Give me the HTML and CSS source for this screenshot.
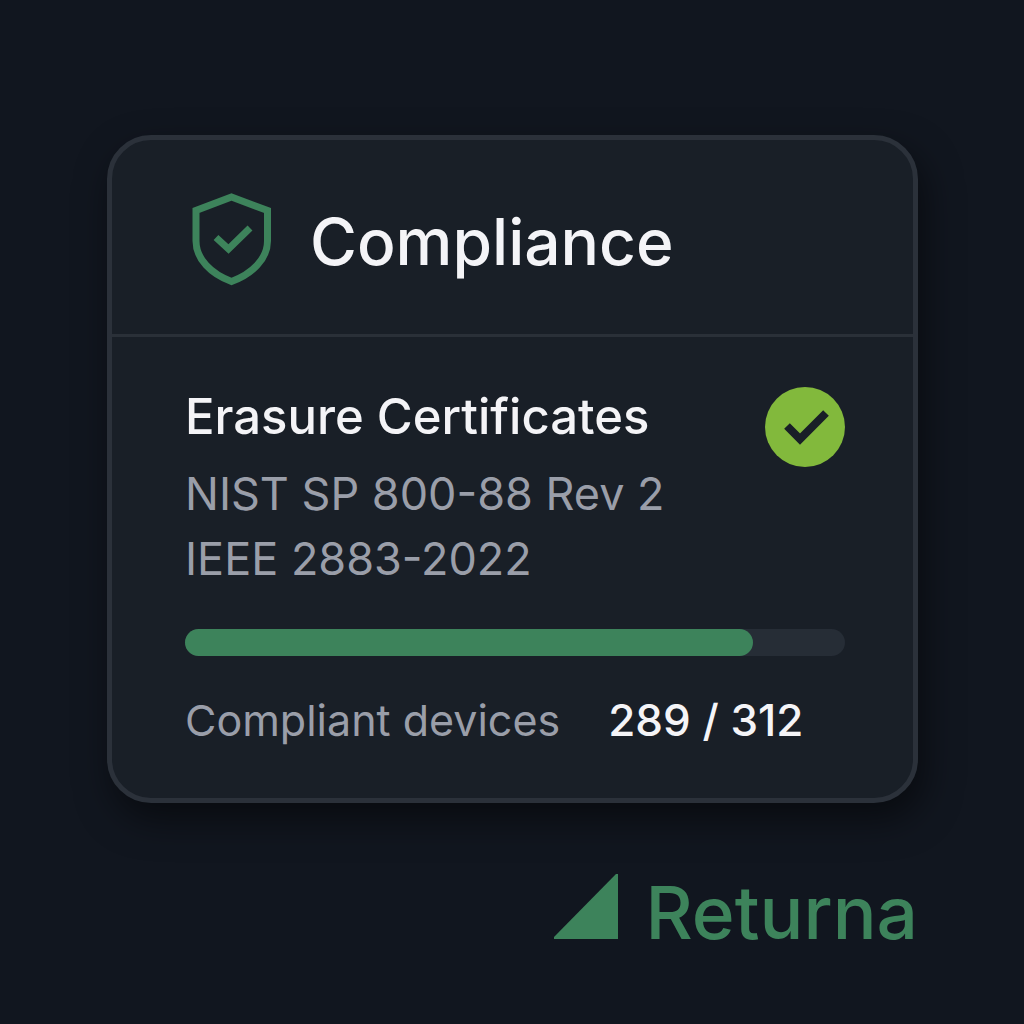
FILE: index.html
```
<!doctype html>
<html lang="en">
<head>
<title>Returna - Compliance</title>
<meta charset="utf-8">
<meta name="viewport" content="width=device-width, initial-scale=1">
<link rel="stylesheet" href="styles.css">
</head>
<body>

<main class="card">

	<header class="card-head">
		<svg class="shield" viewBox="0 0 80 94" aria-hidden="true">
			<path d="M39.500 4 L75.500 17.500 V48 C75.500 66 60 81 39.500 88.500 C19 81 4 66 4 48 V17.500 Z"/>
			<path class="tick" d="M24 44.500 L36.500 56 L58 35"/>
		</svg>
		<h1>Compliance</h1>
	</header>

	<section class="card-body">

		<div class="certs">
			<div>
				<h2>Erasure Certificates</h2>
				<p>NIST SP 800-88 Rev 2</p>
				<p>IEEE 2883-2022</p>
			</div>
			<svg class="badge" viewBox="0 0 80 80" role="img" aria-label="Passed">
				<circle cx="40" cy="40" r="40"/>
				<path d="M22 39 L35 52 L61 26"/>
			</svg>
		</div>

		<div class="bar" role="progressbar" aria-label="Compliant devices" aria-valuemin="0" aria-valuemax="312" aria-valuenow="289">
			<div class="fill" style="width: 86%"></div>
		</div>

		<div class="devices">
			<span>Compliant devices</span>
			<strong>289 / 312</strong>
		</div>

	</section>

</main>

<footer class="brand">
	<svg class="logo" viewBox="0 0 64 65" aria-hidden="true">
		<path d="M62 0 L64 0 V65 H0 V63 Z"/>
	</svg>
	<span>Returna</span>
</footer>

</body>
</html>
```
FILE: styles.css
```
* { margin: 0; padding: 0; box-sizing: border-box; }

body {
	min-height: 100vh;
	padding: 135px 106px 60px 107px;
	background: #11161f;
	font-family: Inter, "Liberation Sans", sans-serif;
	color: #f4f4f7;
}

.card {
	border: 5px solid #2b313a;
	border-radius: 44px;
	background: #191f27;
	box-shadow: 6px 16px 36px rgba(0,0,0,0.5);
}

.card-head {
	display: flex;
	align-items: center;
	gap: 38px;
	padding: 53px 80px 47px;
	border-bottom: 3px solid #2a3038;
}
.shield {
	width: 80px; height: 94px;
	fill: none;
	stroke: #3d835b;
	stroke-width: 7;
}

h1 {
	padding-top: 4px;
	font-size: 64px;
	line-height: 80px;
	font-weight: 500;
}

.card-body { padding: 50px 68px 48px 73px; }

.certs {
	display: flex;
	justify-content: space-between;
	align-items: flex-start;
}
h2 {
	margin-bottom: 14px;
	font-size: 49px;
	line-height: 60px;
	font-weight: 500;
}
p {
	font-size: 45px;
	line-height: 65px;
	color: #9a9ea9;
}
.badge {
	width: 80px; height: 80px;
	fill: #82b93c;
}
.badge path {
	fill: none;
	stroke: #191f27;
	stroke-width: 8;
}

.bar {
	height: 27px;
	margin: 38px 0 34px;
	border-radius: 14px;
	background: #262d36;
}
.fill {
	height: 100%;
	border-radius: 14px;
	background: #3d835b;
}

.devices {
	display: flex;
	align-items: baseline;
	gap: 48px;
	font-size: 43px;
	line-height: 60px;
	color: #9a9ea9;
}
.devices strong {
	font-size: 44px;
	font-weight: 500;
	color: #f4f4f7;
}

.brand {
	display: flex;
	justify-content: flex-end;
	align-items: baseline;
	gap: 28px;
	margin-top: 65px;
	font-size: 73px;
	line-height: 90px;
	font-weight: 500;
	color: #3d835b;
}
.logo {
	width: 64px; height: 65px;
	fill: #3d835b;
}
```
